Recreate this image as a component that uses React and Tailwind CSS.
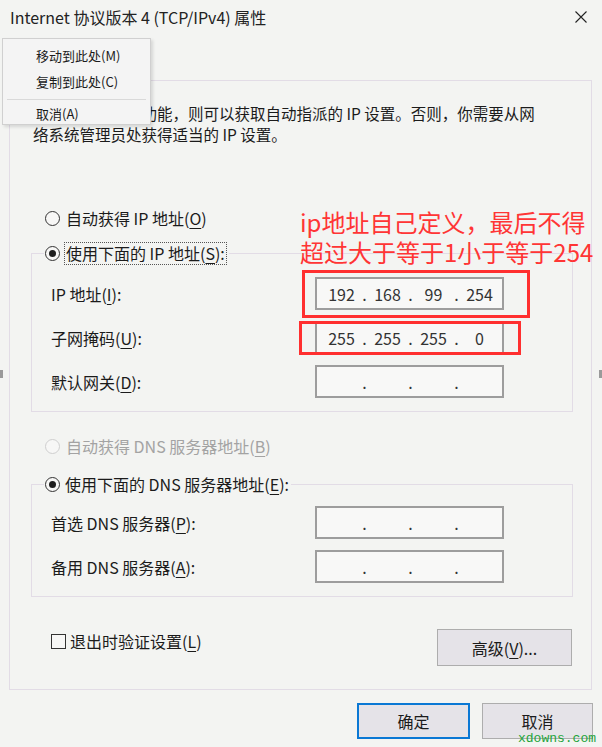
import React, { Fragment } from "react";

function U({ children }) {
  return <span className="underline underline-offset-[3px] decoration-1">{children}</span>;
}

function Radio({ checked, disabled }) {
  return (
    <span
      className={
        disabled
          ? "w-[15px] h-[15px] shrink-0 rounded-full border border-[#cfcfcf] bg-[#f7f7f6] flex items-center justify-center"
          : "w-[15px] h-[15px] shrink-0 rounded-full border border-[#333333] bg-[#f7f7f6] flex items-center justify-center"
      }
    >
      {checked && <span className="w-[7px] h-[7px] rounded-full bg-[#1e1e1e]" />}
    </span>
  );
}

function IpBox({ parts }) {
  return (
    <div className="w-[189px] h-[33px] border-2 border-[#9d9d9d] bg-[#f8f8f7] flex items-center pl-[4px] text-[16px] leading-none text-[#333333]">
      {parts.map((p, i) => (
        <Fragment key={i}>
          {i > 0 && <span className="w-[5px] text-center">.</span>}
          <span className="w-[41px] text-center">{p}</span>
        </Fragment>
      ))}
    </div>
  );
}

function FieldRow({ label, parts }) {
  return (
    <div className="flex items-center h-[33px]">
      <span className="w-[283px] pl-[19px]">{label}</span>
      <IpBox parts={parts} />
    </div>
  );
}

export default function App() {
  const empty = ["", "", "", ""];
  return (
    <div className="relative w-[602px] h-[747px] overflow-hidden bg-[#f3f4f2] text-[16px] text-[#1b1b1b] font-['Noto_Sans_CJK_SC','Microsoft_YaHei',sans-serif]">
      {/* Title bar */}
      <div className="h-[34px] flex items-center justify-between pl-[10px] pr-[15px]">
        <span className="text-[16px] leading-none text-[#222222]">Internet 协议版本 4 (TCP/IPv4) 属性</span>
        <svg width="12" height="12" viewBox="0 0 12 12" className="text-[#222222]">
          <path d="M0.5 0.5 L11.5 11.5 M11.5 0.5 L0.5 11.5" stroke="currentColor" strokeWidth="1.1" fill="none" />
        </svg>
      </div>
      <div className="h-[46px]" />

      {/* Main panel */}
      <div className="ml-[9px] w-[583px] border border-[#e2dce6] pt-[22px] pb-[23px]">
        <div className="pl-[23px] text-[15.5px] leading-[21px]">
          <div>如果网络支持此功能，则可以获取自动指派的 IP 设置。否则，你需要从网</div>
          <div>络系统管理员处获得适当的 IP 设置。</div>
        </div>

        <div className="mt-[62px] h-[22px] pl-[35px] flex items-center gap-[6px]">
          <Radio />
          <span className="leading-none">
            自动获得 IP 地址(<U>O</U>)
          </span>
        </div>

        <fieldset className="ml-[21px] w-[542px] border border-[#e2dce6] mt-[12px] pt-[12px] pb-[13px]">
          <legend className="ml-[12px] pl-[1px] pr-[2px]">
            <span className="flex items-center gap-[4px] h-[24px]">
              <Radio checked />
              <span className="border border-dotted border-[#555555] px-[1px] leading-[21px]">
                使用下面的 IP 地址(<U>S</U>):
              </span>
            </span>
          </legend>
          <div className="flex flex-col gap-[11px]">
            <FieldRow label={<>IP 地址(<U>I</U>):</>} parts={["192", "168", "99", "254"]} />
            <FieldRow label={<>子网掩码(<U>U</U>):</>} parts={["255", "255", "255", "0"]} />
            <FieldRow label={<>默认网关(<U>D</U>):</>} parts={empty} />
          </div>
        </fieldset>

        <div className="mt-[23px] h-[22px] pl-[35px] flex items-center gap-[6px] text-[#a3a3a3]">
          <Radio disabled />
          <span className="leading-none">
            自动获得 DNS 服务器地址(<U>B</U>)
          </span>
        </div>

        <fieldset className="ml-[21px] w-[542px] border border-[#e2dce6] mt-[15px] pt-[10px] pb-[13px]">
          <legend className="ml-[12px] pl-[1px] pr-[2px]">
            <span className="flex items-center gap-[5px] h-[24px]">
              <Radio checked />
              <span className="leading-[21px]">
                使用下面的 DNS 服务器地址(<U>E</U>):
              </span>
            </span>
          </legend>
          <div className="flex flex-col gap-[11px]">
            <FieldRow label={<>首选 DNS 服务器(<U>P</U>):</>} parts={empty} />
            <FieldRow label={<>备用 DNS 服务器(<U>A</U>):</>} parts={empty} />
          </div>
        </fieldset>

        <div className="ml-[21px] w-[542px] mt-[32px] flex items-start justify-between">
          <div className="ml-[20px] mt-[2px] flex items-center gap-[4px] h-[20px]">
            <span className="w-[15px] h-[15px] border border-[#333333] bg-[#f7f7f6]" />
            <span className="leading-none">
              退出时验证设置(<U>L</U>)
            </span>
          </div>
          <button className="mr-[1px] w-[135px] h-[37px] border border-[#adadad] bg-[#e5e3e8] text-[16px] leading-none text-[#1b1b1b]">
            高级(<U>V</U>)...
          </button>
        </div>
      </div>

      {/* Footer buttons */}
      <div className="mt-[13px] flex justify-end gap-[12px] pr-[9px]">
        <button className="w-[113px] h-[36px] border-2 border-[#0a78d4] bg-[#e5e3e8] text-[16px] leading-none text-[#1b1b1b]">
          确定
        </button>
        <button className="w-[111px] h-[36px] border border-[#adadad] bg-[#e5e3e8] text-[16px] leading-none text-[#1b1b1b]">
          取消
        </button>
      </div>

      {/* Context menu overlay */}
      <div className="absolute left-[2px] top-[38px] w-[149px] h-[87px] bg-[#f4f4f4] border border-[#d0d0d0] shadow-[2px_2px_3px_rgba(0,0,0,0.12)] text-[13px] text-[#1b1b1b] pt-[4px]">
        <div className="h-[26px] flex items-center pl-[33px]">移动到此处(M)</div>
        <div className="h-[26px] flex items-center pl-[33px]">复制到此处(C)</div>
        <div className="mx-[4px] my-[4px] h-px bg-[#d9d9d9]" />
        <div className="h-[20px] flex items-center pl-[33px]">取消(A)</div>
      </div>

      {/* Red annotation */}
      <div className="absolute left-[300px] top-[207px] text-[24px] leading-[30px] text-[#ff3535] whitespace-nowrap">
        <div>ip地址自己定义，最后不得</div>
        <div>超过大于等于1小于等于254</div>
      </div>
      <div className="absolute left-[302px] top-[270px] w-[228px] h-[48px] border-[3px] border-[#ff2f2f]" />
      <div className="absolute left-[299px] top-[321px] w-[222px] h-[34px] border-[3px] border-[#ff2f2f]" />

      {/* Resize grips */}
      <div className="absolute left-0 top-[370px] w-[3px] h-[8px] bg-[#9a9a9a]" />
      <div className="absolute right-0 top-[370px] w-[3px] h-[8px] bg-[#9a9a9a]" />

      {/* Watermark */}
      <div className="absolute left-[518px] top-[731px] text-[13px] leading-[16px] text-[#22a33a] font-['Liberation_Mono',monospace]">
        xdowns.com
      </div>
    </div>
  );
}
